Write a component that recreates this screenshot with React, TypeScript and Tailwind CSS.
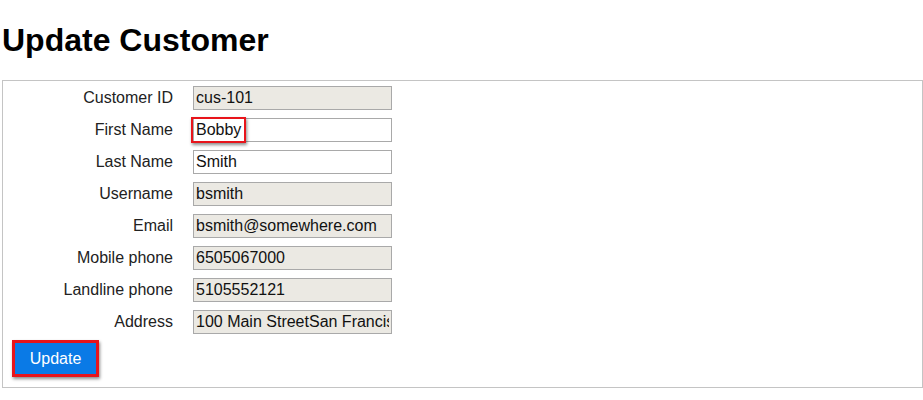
import React from 'react';

interface Field {
  label: string;
  value: string;
  editable?: boolean;
  highlight?: boolean;
}

const fields: Field[] = [
  { label: 'Customer ID', value: 'cus-101' },
  { label: 'First Name', value: 'Bobby', editable: true, highlight: true },
  { label: 'Last Name', value: 'Smith', editable: true },
  { label: 'Username', value: 'bsmith' },
  { label: 'Email', value: 'bsmith@somewhere.com' },
  { label: 'Mobile phone', value: '6505067000' },
  { label: 'Landline phone', value: '5105552121' },
  { label: 'Address', value: '100 Main StreetSan Francisco' },
];

export default function App() {
  return (
    <div className="h-[400px] overflow-hidden bg-white pl-[2px] pt-[22px] text-[#222] font-['Liberation_Sans',Arial,sans-serif]">
      <h1 className="mb-[21px] text-[32px] font-bold leading-[37px] text-black">Update Customer</h1>

      <div className="w-[921px] border border-[#c4c4c4] pt-[5px] pb-[10px]">
        <div className="flex flex-col gap-[8px]">
          {fields.map((f) => (
            <div key={f.label} className="flex items-center h-[24px]">
              <div className="w-[170px] text-right text-[16px] leading-[24px]">{f.label}</div>
              <div className="relative ml-[20px]">
                <input
                  type="text"
                  readOnly
                  value={f.value}
                  className={`block w-[199px] h-[24px] border border-[#a9a9a9] px-[2px] text-[16px] leading-[22px] text-[#111] outline-none ${
                    f.editable ? 'bg-white' : 'bg-[#ebe9e3]'
                  }`}
                />
                {f.highlight && (
                  <span className="absolute left-[-2px] top-[-1px] w-[55px] h-[26px] border-2 border-[#e8141b] shadow-[1px_2px_3px_rgba(0,0,0,0.45)] pointer-events-none" />
                )}
              </div>
            </div>
          ))}
        </div>

        <div className="mt-[6px] ml-[9px]">
          <span className="inline-block border-[3px] border-[#e8141b] shadow-[1px_2px_3px_rgba(0,0,0,0.45)]">
            <button className="block w-[81px] h-[31px] bg-[#0a7ae6] text-white text-[16px] leading-[31px]">
              Update
            </button>
          </span>
        </div>
      </div>
    </div>
  );
}
